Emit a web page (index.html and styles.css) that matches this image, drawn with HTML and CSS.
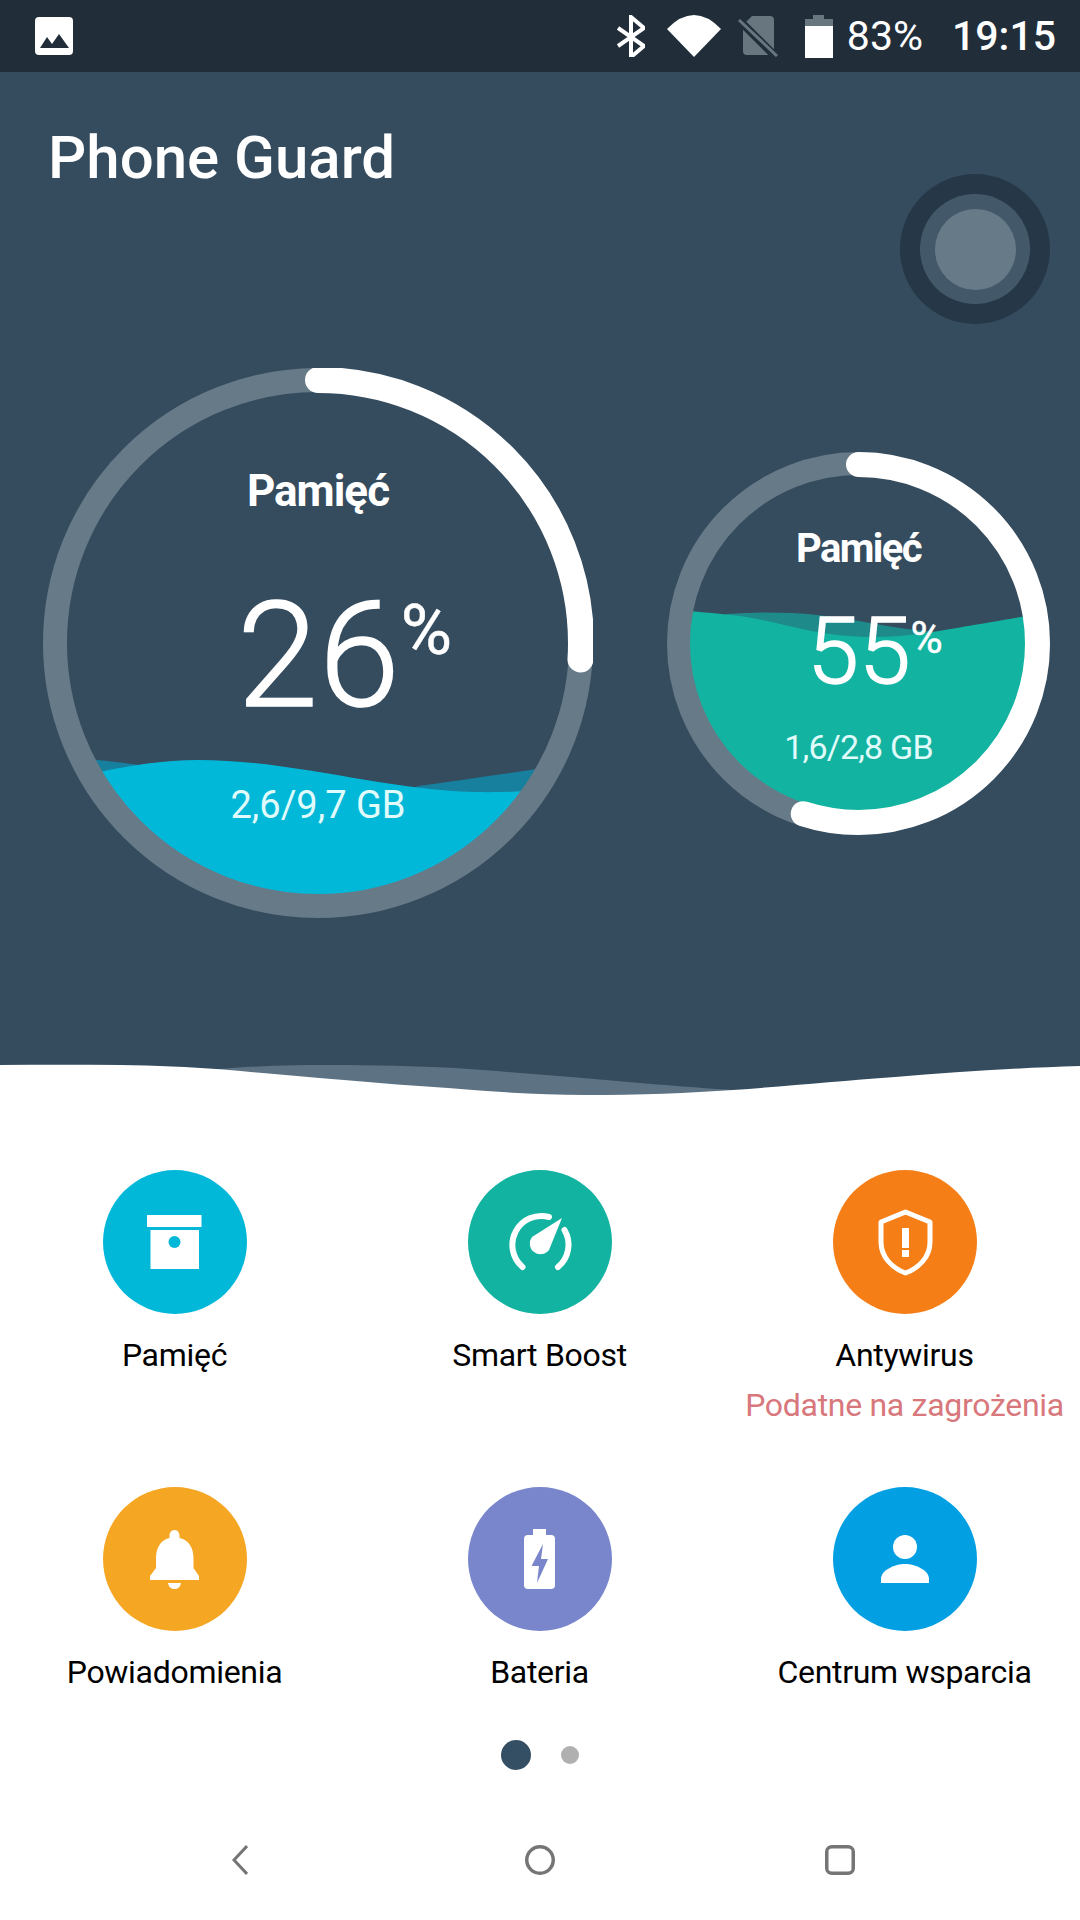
FILE: index.html
```html
<!DOCTYPE html>
<html lang="en">
<head>
  <meta charset="UTF-8">
  <meta name="viewport" content="width=device-width, initial-scale=1.0">
  <title>Phone Guard</title>
  <link rel="stylesheet" href="styles.css">
</head>
<body>
  <div class="status-bar">
    <svg class="status-picture" width="38" height="38" viewBox="0 0 38 38">
      <rect width="38" height="38" rx="4" fill="#fff"/>
      <path d="M5 31 L12 20 L17 27 L24 17 L34 31 Z" fill="#212e3a"/>
    </svg>
    <div class="status-right">
      <svg width="28" height="42" viewBox="0 0 28 42">
        <path d="M1 13 L27 31 L14 42 V2 L27 13 L1 31" fill="none" stroke="#fff" stroke-width="4"/>
      </svg>
      <svg class="status-wifi" width="54" height="42" viewBox="0 0 54 42">
        <path d="M0 14 Q27 -14 54 14 L27 42 Z" fill="#fff"/>
      </svg>
      <svg class="status-sim" width="40" height="42" viewBox="0 0 40 42">
        <path d="M14 1 H32 a4 4 0 0 1 4 4 V36 a4 4 0 0 1 -4 4 H9 a4 4 0 0 1 -4 -4 V10 Z" fill="#67767f"/>
        <path d="M0 4 L38 42" stroke="#212e3a" stroke-width="8"/>
        <path d="M1 5 L39 41" stroke="#67767f" stroke-width="3"/>
      </svg>
      <svg class="status-battery" width="28" height="43" viewBox="0 0 28 43">
        <path d="M8 0 H19 V4 H28 V11 H0 V4 H8 Z" fill="#67767f"/>
        <rect y="11" width="28" height="32" fill="#fff"/>
      </svg>
      <span class="status-percent">83%</span>
      <span class="status-time">19:15</span>
    </div>
  </div>

  <div class="hero">
    <div class="hero-top">
      <h1>Phone Guard</h1>
      <div class="toggle-outer"><div class="toggle-mid"><div class="toggle-inner"></div></div></div>
    </div>

    <div class="gauges">
      <div class="gauge gauge-big">
        <svg class="gauge-art" width="550" height="550" viewBox="0 0 550 550">
          <defs><clipPath id="bigClip"><circle cx="275" cy="275" r="252"/></clipPath></defs>
          <g clip-path="url(#bigClip)">
            <path d="M30 390 C60 392 90 396 120 400 L300 440 L376 418 C420 412 460 406 530 396 V560 H0 Z" fill="#17809f"/>
            <path d="M30 410 C80 398 120 392 155 392 C250 392 340 422 431 424 C455 424.5 480 424 530 420 V560 H0 Z" fill="#02b8d9"/>
          </g>
          <circle cx="275" cy="275" r="263" fill="none" stroke="#677a88" stroke-width="24"/>
          <circle cx="275" cy="275" r="263" fill="none" stroke="#fff" stroke-width="26" stroke-linecap="round" pathLength="100" stroke-dasharray="26 100" transform="rotate(-90 275 275)"/>
        </svg>
        <div class="gauge-title">Pamięć</div>
        <div class="gauge-value">26<span class="gauge-percent">%</span></div>
        <div class="gauge-detail">2,6/9,7 GB</div>
      </div>

      <div class="gauge gauge-small">
        <svg class="gauge-art" width="383" height="383" viewBox="0 0 383 383">
          <defs><clipPath id="smallClip"><circle cx="191.5" cy="191.5" r="170"/></clipPath></defs>
          <g clip-path="url(#smallClip)">
            <path d="M60 162 C90 160 120 160 150 163 C190 167 230 178 270 180 V300 H60 Z" fill="#1f8a8a"/>
            <path d="M0 157 C30 160 50 161 73 164 C100 168 120 174 140 178 C165 183 185 185 206 185 C225 185 245 183 266 180 C295 175 325 170 383 160 V383 H0 Z" fill="#12b3a0"/>
          </g>
          <circle cx="191.5" cy="191.5" r="180" fill="none" stroke="#677a88" stroke-width="23"/>
          <circle cx="191.5" cy="191.5" r="179" fill="none" stroke="#fff" stroke-width="25" stroke-linecap="round" pathLength="100" stroke-dasharray="55 100" transform="rotate(-90 191.5 191.5)"/>
        </svg>
        <div class="gauge-title">Pamięć</div>
        <div class="gauge-value">55<span class="gauge-percent">%</span></div>
        <div class="gauge-detail">1,6/2,8 GB</div>
      </div>
    </div>

    <svg class="hero-wave" width="1080" height="37" viewBox="0 0 1080 37">
      <path d="M200 8 C245 3 290 2 330 2 C375 2 415 3 455 5 C510 9 560 13 606 17 C650 21 700 25 733 27 V37 H200 Z" fill="#5d7283"/>
      <path d="M0 2 C40 1.500 80 1.500 120 2 C155 2.500 190 4 220 6.300 C262 10 305 14 344 17 C380 20 415 23 448 25 C495 29 540 32 585 32 C640 32 690 30 733 27 C790 23 840 18 895 14 C955 9 1015 5 1080 3 V37 H0 Z" fill="#fff"/>
    </svg>
  </div>

  <div class="tiles">
    <div class="tile">
      <svg class="tile-icon" width="144" height="144" viewBox="0 0 144 144">
        <circle cx="72" cy="72" r="72" fill="#02b8d9"/>
        <rect x="44" y="45" width="54.5" height="12" fill="#fff"/>
        <rect x="47.5" y="60" width="48.5" height="39" fill="#fff"/>
        <circle cx="71.5" cy="72" r="6" fill="#02b8d9"/>
      </svg>
      <div class="tile-label">Pamięć</div>
    </div>
    <div class="tile">
      <svg class="tile-icon" width="144" height="144" viewBox="0 0 144 144">
        <circle cx="72" cy="72" r="72" fill="#12b3a0"/>
        <path d="M54.5 97 A29 29 0 0 1 81 47" fill="none" stroke="#fff" stroke-width="6" stroke-linecap="round"/>
        <path d="M96.5 60 A29 29 0 0 1 90 97" fill="none" stroke="#fff" stroke-width="6" stroke-linecap="round"/>
        <path d="M94 48 L81 80 A10.5 10.5 0 1 1 64 67 Z" fill="#fff"/>
      </svg>
      <div class="tile-label">Smart Boost</div>
    </div>
    <div class="tile">
      <svg class="tile-icon" width="144" height="144" viewBox="0 0 144 144">
        <circle cx="72" cy="72" r="72" fill="#f57e17"/>
        <path d="M72.5 42 L97 52 V72 C97 87 86 98 72.5 103 C59 98 48 87 48 72 V52 Z" fill="none" stroke="#fff" stroke-width="5" stroke-linejoin="round"/>
        <rect x="69" y="58" width="7" height="20" fill="#fff"/>
        <rect x="69" y="80" width="7" height="7" fill="#fff"/>
      </svg>
      <div class="tile-label">Antywirus</div>
      <div class="tile-warning">Podatne na zagrożenia</div>
    </div>
    <div class="tile">
      <svg class="tile-icon" width="144" height="144" viewBox="0 0 144 144">
        <circle cx="72" cy="72" r="72" fill="#f5a623"/>
        <path d="M71.5 43 c3.5 0 5 3 5 6 v2 c10 2 14 11 14 20 v10 l5.500 8 v4 H47 v-4 l6 -8 V71 c0 -9 4 -18 13.500 -20 v-2 c0 -3 1.500 -6 5 -6 Z" fill="#fff"/>
        <path d="M65 96 h13 q-1 6 -6.500 6 q-5.500 0 -6.500 -6 Z" fill="#fff"/>
      </svg>
      <div class="tile-label">Powiadomienia</div>
    </div>
    <div class="tile">
      <svg class="tile-icon" width="144" height="144" viewBox="0 0 144 144">
        <circle cx="72" cy="72" r="72" fill="#7986cb"/>
        <rect x="65" y="42" width="13" height="8" fill="#fff"/>
        <rect x="56" y="48" width="31" height="54" rx="4" fill="#fff"/>
        <path d="M75 57 L63.500 79 H71 L69 96 L80 72 H73 Z" fill="#7986cb"/>
      </svg>
      <div class="tile-label">Bateria</div>
    </div>
    <div class="tile">
      <svg class="tile-icon" width="144" height="144" viewBox="0 0 144 144">
        <circle cx="72" cy="72" r="72" fill="#039fe3"/>
        <circle cx="72" cy="60" r="12" fill="#fff"/>
        <path d="M48 96 v-4 c0 -9 14 -15 24 -15 s24 6 24 15 v4 Z" fill="#fff"/>
      </svg>
      <div class="tile-label">Centrum wsparcia</div>
    </div>
  </div>

  <div class="dots">
    <span class="dot dot-active"></span>
    <span class="dot"></span>
  </div>

  <div class="nav-bar">
    <svg width="16" height="30" viewBox="0 0 16 30">
      <path d="M15 1 L2 15 L15 29" fill="none" stroke="#757575" stroke-width="3"/>
    </svg>
    <svg class="nav-home" width="30" height="30" viewBox="0 0 30 30">
      <circle cx="15" cy="15" r="13.250" fill="none" stroke="#757575" stroke-width="3.500"/>
    </svg>
    <svg width="30" height="30" viewBox="0 0 30 30">
      <rect x="1.750" y="1.750" width="26.500" height="26.500" rx="5" fill="none" stroke="#757575" stroke-width="3.500"/>
    </svg>
  </div>
</body>
</html>
```

FILE: styles.css
```css
body {
  font-family: Roboto, "Liberation Sans", sans-serif;
  margin: 0;
  width: 1080px;
  height: 1920px;
  overflow: hidden;
  background-color: #fff;
  color: #000;
}

svg {
  display: block;
}

.status-bar {
  height: 72px;
  background-color: #212e3a;
  color: #fff;
  display: flex;
  align-items: center;
  justify-content: space-between;
  padding: 0 24px 0 35px;
}

.status-right {
  display: flex;
  align-items: center;
  gap: 22px;
}

.status-sim {
  margin-left: -5px;
}

.status-battery {
  margin-left: 5px;
}

.status-percent {
  font-size: 41px;
  margin-left: -8px;
}

.status-time {
  font-size: 41px;
  font-weight: 500;
  margin-left: 7px;
}

.hero {
  background-color: #354c5f;
  color: #fff;
}

.hero-top {
  height: 252px;
  display: flex;
  justify-content: space-between;
  align-items: flex-start;
  padding: 0 30px 0 48px;
}

h1 {
  font-size: 60px;
  font-weight: 500;
  line-height: 68px;
  margin: 52px 0 0;
}

.toggle-outer {
  width: 150px;
  height: 150px;
  margin-top: 102px;
  border-radius: 50%;
  background-color: #263847;
  display: flex;
  align-items: center;
  justify-content: center;
}

.toggle-mid {
  width: 110px;
  height: 110px;
  border-radius: 50%;
  background-color: #43596a;
  display: flex;
  align-items: center;
  justify-content: center;
}

.toggle-inner {
  width: 81px;
  height: 81px;
  border-radius: 50%;
  background-color: #677a88;
}

.gauges {
  display: flex;
  align-items: center;
  gap: 74px;
  margin-top: 44px;
  padding-left: 43px;
}

.gauge {
  position: relative;
  box-sizing: border-box;
  display: flex;
  flex-direction: column;
  align-items: center;
}

.gauge > div {
  position: relative;
}

.gauge-art {
  position: absolute;
  top: 0;
  left: 0;
}

.gauge-big {
  width: 550px;
  height: 550px;
  padding-top: 98px;
}

.gauge-small {
  width: 383px;
  height: 383px;
  padding-top: 74px;
}

.gauge-title {
  font-weight: 700;
  letter-spacing: -1px;
}

.gauge-value {
  display: flex;
  align-items: flex-start;
  font-weight: 300;
  -webkit-text-stroke: 1.5px #fff;
}

.gauge-percent {
  font-weight: 400;
  -webkit-text-stroke: 0.5px #fff;
}

.gauge-detail {
  color: #e0fbfb;
}

.gauge-big .gauge-title {
  font-size: 44px;
  line-height: 50px;
}

.gauge-big .gauge-value {
  font-size: 146px;
  line-height: 146px;
  letter-spacing: 1px;
  margin-top: 68px;
  padding-left: 54px;
}

.gauge-big .gauge-percent {
  font-size: 70px;
  line-height: 68px;
  margin: 12px 0 0;
}

.gauge-big .gauge-detail {
  font-size: 38px;
  line-height: 44px;
  margin-top: 53px;
}

.gauge-small .gauge-title {
  font-size: 40px;
  line-height: 46px;
  letter-spacing: -1.6px;
}

.gauge-small .gauge-value {
  font-size: 93px;
  line-height: 93px;
  margin-top: 33px;
  padding-left: 33px;
}

.gauge-small .gauge-percent {
  font-size: 44px;
  line-height: 46px;
  margin: 10px 0 0;
}

.gauge-small .gauge-detail {
  font-size: 34px;
  line-height: 40px;
  letter-spacing: -0.8px;
  margin-top: 29px;
}

.hero-wave {
  margin-top: 145px;
}

.tiles {
  display: grid;
  grid-template-columns: repeat(3, 365px);
  row-gap: 62px;
  margin-left: -8px;
  padding-top: 70px;
}

.tile {
  display: flex;
  flex-direction: column;
  align-items: center;
}

.tile-label {
  font-size: 32px;
  line-height: 40px;
  letter-spacing: -0.3px;
  margin-top: 21px;
  white-space: nowrap;
}

.tile-warning {
  font-size: 32px;
  line-height: 40px;
  letter-spacing: -0.3px;
  margin-top: 10px;
  color: #d8787c;
  white-space: nowrap;
}

.dots {
  display: flex;
  align-items: center;
  gap: 30px;
  margin-top: 48px;
  padding-left: 501px;
}

.dot {
  width: 18px;
  height: 18px;
  border-radius: 50%;
  background-color: #b0b0b0;
}

.dot-active {
  width: 30px;
  height: 30px;
  background-color: #344f64;
}

.nav-bar {
  display: flex;
  justify-content: space-between;
  align-items: center;
  margin-top: 75px;
  padding: 0 225px 0 232px;
}

.nav-home {
  margin-left: 7px;
}
```
